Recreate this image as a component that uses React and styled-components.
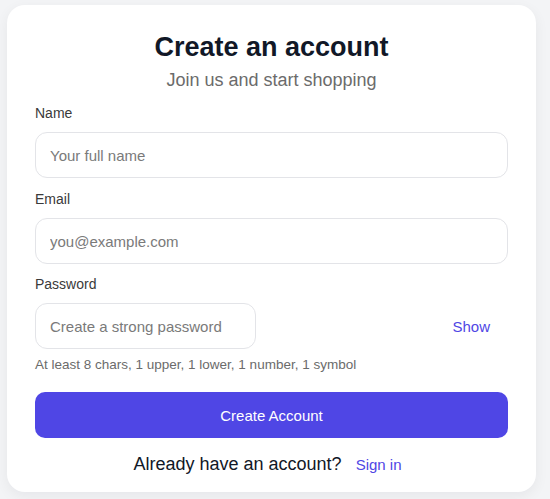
import React from "react";
import styled, { createGlobalStyle } from "styled-components";

const Global = createGlobalStyle`
  html, body { margin: 0; padding: 0; background: #f3f4f6; }
  body { font-family: "Liberation Sans", Arial, sans-serif; }
  * { box-sizing: border-box; }
`;

const Page = styled.div`
  padding: 5px 14px 7px 7px;
`;

const Card = styled.form`
  width: 529px;
  background: #ffffff;
  border-radius: 18px;
  box-shadow: 0 4px 14px rgba(17, 24, 39, 0.06);
  padding: 26px 28px 17px;
  display: flex;
  flex-direction: column;
`;

const Title = styled.h1`
  margin: 0;
  text-align: center;
  font-size: 27px;
  line-height: 32px;
  font-weight: 700;
  color: #111827;
`;

const Subtitle = styled.p`
  margin: 4px 0 0;
  text-align: center;
  font-size: 18px;
  line-height: 26px;
  color: #6b6b6b;
`;

const Field = styled.div`
  display: flex;
  flex-direction: column;
  margin-top: ${(p) => p.$mt}px;
`;

const Label = styled.label`
  font-size: 14px;
  line-height: 20px;
  color: #3a3a3a;
  margin-bottom: 9px;
`;

const Input = styled.input`
  height: 46px;
  width: ${(p) => p.$w || "100%"};
  border: 1px solid #e3e4e8;
  border-radius: 12px;
  padding: 0 14px;
  font-family: inherit;
  font-size: 15px;
  color: #111827;
  background: #fff;
  outline: none;
  &::placeholder { color: #7a7a7a; }
`;

const PasswordRow = styled.div`
  display: flex;
  align-items: center;
  justify-content: space-between;
`;

const LinkButton = styled.button`
  border: none;
  background: none;
  font-family: inherit;
  font-size: 15px;
  color: #4f46e5;
  padding: 0 ${(p) => p.$px}px;
  cursor: pointer;
`;

const Hint = styled.div`
  margin-top: 8px;
  font-size: 13.5px;
  line-height: 16px;
  color: #6b6b6b;
`;

const Primary = styled.button`
  margin-top: 19px;
  height: 46px;
  border: none;
  border-radius: 10px;
  background: #4f46e5;
  color: #ffffff;
  font-family: inherit;
  font-size: 15px;
  cursor: pointer;
`;

const Footer = styled.div`
  margin-top: 15px;
  display: flex;
  justify-content: center;
  align-items: center;
  gap: 6px;
`;

const FooterText = styled.span`
  font-size: 18px;
  line-height: 22px;
  color: #111827;
`;

export default function App() {
  return (
    <>
      <Global />
      <Page>
        <Card onSubmit={(e) => e.preventDefault()}>
          <Title>Create an account</Title>
          <Subtitle>Join us and start shopping</Subtitle>
          <Field $mt={10}>
            <Label>Name</Label>
            <Input placeholder="Your full name" />
          </Field>
          <Field $mt={11}>
            <Label>Email</Label>
            <Input placeholder="you@example.com" />
          </Field>
          <Field $mt={10}>
            <Label>Password</Label>
            <PasswordRow>
              <Input $w="221px" type="password" placeholder="Create a strong password" />
              <LinkButton type="button" $px={18}>Show</LinkButton>
            </PasswordRow>
          </Field>
          <Hint>At least 8 chars, 1 upper, 1 lower, 1 number, 1 symbol</Hint>
          <Primary type="submit">Create Account</Primary>
          <Footer>
            <FooterText>Already have an account?</FooterText>
            <LinkButton type="button" $px={8}>Sign in</LinkButton>
          </Footer>
        </Card>
      </Page>
    </>
  );
}
